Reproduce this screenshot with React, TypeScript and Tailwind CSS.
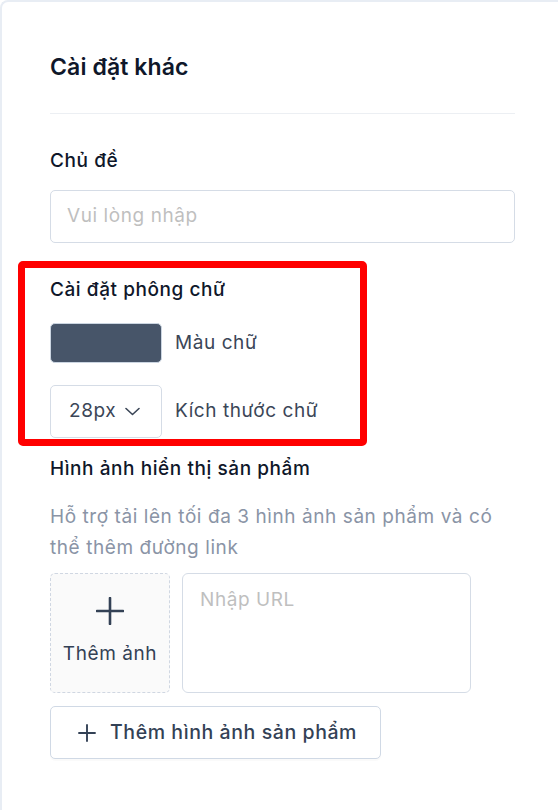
import React from 'react';

const font = { fontFamily: 'Inter, "Noto Sans", sans-serif' };

const PlusIcon = ({ size, stroke }: { size: number; stroke: number }) => (
  <svg width={size} height={size} viewBox={`0 0 ${size} ${size}`} fill="none" stroke="#334155" strokeWidth={stroke} strokeLinecap="round">
    <line x1={size / 2} y1={1} x2={size / 2} y2={size - 1} />
    <line x1={1} y1={size / 2} x2={size - 1} y2={size / 2} />
  </svg>
);

export default function App() {
  return (
    <div className="min-h-screen bg-white" style={font}>
      <div className="min-h-[820px] w-[570px] rounded-tl-lg border-l-2 border-t-2 border-[#e8edf4] bg-white pl-[48px] pt-[51px]">
        <div className="w-[465px]">
          <h2 className="text-[23px] font-semibold leading-[28px] tracking-[0.005em] text-[#0f172a]">Cài đặt khác</h2>
          <div className="mt-[32px] h-px bg-[#eceff3]" />

          <div className="mt-[35px] text-[19px] font-medium leading-[24px] tracking-[0.03em] text-[#0f172a]">Chủ đề</div>
          <div className="mt-[17px] flex h-[53px] items-center rounded-[5px] border border-[#d5dce6] px-[16px]">
            <input
              className="w-full bg-transparent text-[19px] tracking-[0.03em] text-[#334155] outline-none placeholder:text-[#bfbfbf]"
              placeholder="Vui lòng nhập"
            />
          </div>

          <div className="relative mt-[35px]">
            <div className="pointer-events-none absolute left-[-32px] top-[-17px] z-10 h-[185px] w-[349px] rounded-[5px] border-[7px] border-[#ff0000]" />
            <div className="text-[19px] font-medium leading-[24px] tracking-[0.03em] text-[#0f172a]">Cài đặt phông chữ</div>
            <div className="mt-[21px] flex items-center gap-[13px]">
              <div className="h-[40px] w-[112px] rounded-[5px] border border-[#cbd5e1] bg-[#475569]" />
              <span className="text-[19px] tracking-[0.03em] text-[#3b4657]">Màu chữ</span>
            </div>
            <div className="mt-[22px] flex items-center gap-[13px]">
              <div className="flex h-[53px] w-[112px] items-center gap-[9px] rounded-[5px] border border-[#d5dce6] pl-[18px]">
                <span className="text-[19px] tracking-[0.03em] text-[#3b4657]">28px</span>
                <svg width="15" height="9" viewBox="0 0 15 9" fill="none" stroke="#3b4657" strokeWidth="1.6" strokeLinecap="round" strokeLinejoin="round">
                  <polyline points="1,1.5 7.5,7.5 14,1.5" />
                </svg>
              </div>
              <span className="text-[19px] tracking-[0.03em] text-[#3b4657]">Kích thước chữ</span>
            </div>
          </div>

          <div className="mt-[19px] text-[19px] font-medium leading-[24px] tracking-[0.03em] text-[#0f172a]">Hình ảnh hiển thị sản phẩm</div>
          <p className="mt-[20px] w-[460px] text-[19px] leading-[31px] tracking-[0.03em] text-[#8a94a6]">
            Hỗ trợ tải lên tối đa 3 hình ảnh sản phẩm và có thể thêm đường link
          </p>

          <div className="mt-[10px] flex gap-[12px]">
            <div className="flex h-[120px] w-[120px] flex-col items-center justify-center rounded-[5px] border border-dashed border-[#d0d7e2] bg-[#fafafa]">
              <PlusIcon size={28} stroke={2.6} />
              <span className="mt-[15px] text-[19px] tracking-[0.03em] text-[#334155]">Thêm ảnh</span>
            </div>
            <div className="h-[120px] w-[289px] rounded-[6px] border border-[#d5dce6] px-[17px] pt-[12px]">
              <textarea
                className="h-full w-full resize-none bg-transparent text-[19px] leading-[28px] tracking-[0.03em] text-[#334155] outline-none placeholder:text-[#bfbfbf]"
                placeholder="Nhập URL"
              />
            </div>
          </div>

          <button className="mt-[13px] flex h-[53px] w-[331px] items-center gap-[14px] rounded-[5px] border border-[#d0d9e5] bg-white pl-[27px] shadow-[0_2px_0_rgba(0,0,0,0.02)]">
            <PlusIcon size={18} stroke={1.9} />
            <span className="text-[19.5px] font-medium tracking-[0.03em] text-[#334155]">Thêm hình ảnh sản phẩm</span>
          </button>
        </div>
      </div>
    </div>
  );
}
